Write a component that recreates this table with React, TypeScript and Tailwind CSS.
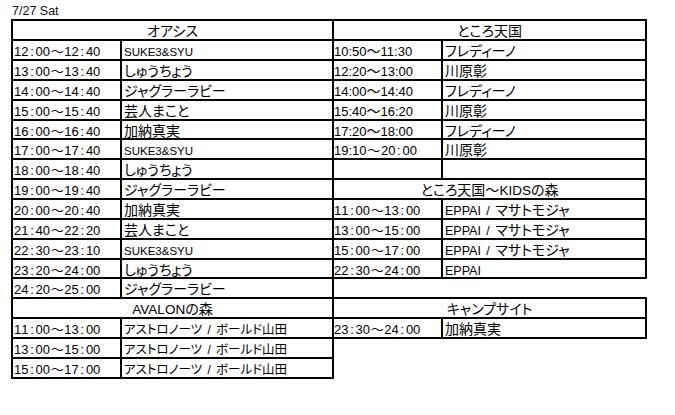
import React from "react";

const H = (k: number) => (k === 5 || k === 12 ? "h-[19px]" : "h-[20px]");

function Runs({ s, latin = "text-[13px]", cjk = "text-[14px]" }: { s: string; latin?: string; cjk?: string }) {
  const parts = s.match(/[\x00-\x7F]+|[^\x00-\x7F]+/g) || [];
  return (
    <>
      {parts.map((p, i) =>
        /^[\x00-\x7F]+$/.test(p) ? (
          <span key={i} className={`font-['Liberation_Sans',sans-serif] whitespace-pre [word-spacing:2px] ${latin}`}>
            {p}
          </span>
        ) : (
          <span key={i} className={`font-['Noto_Sans_CJK_JP',sans-serif] [font-feature-settings:'palt'] ${cjk}`}>
            {p}
          </span>
        )
      )}
    </>
  );
}

function Mono({ s }: { s: string }) {
  return (
    <>
      {Array.from(s).map((c, i) =>
        c.charCodeAt(0) < 128 ? (
          <span key={i} className="inline-block w-[7.2px] text-center font-['Liberation_Sans',sans-serif] text-[13px]">
            {c}
          </span>
        ) : (
          <span key={i} className="inline-block w-[14.4px] text-center font-['Noto_Sans_CJK_JP',sans-serif] text-[13px]">
            {c}
          </span>
        )
      )}
    </>
  );
}

type RowT =
  | { kind: "head"; text: string }
  | { kind: "row"; time: React.ReactNode; name: React.ReactNode }
  | { kind: "empty" }
  | { kind: "spacer" };

const suke = <Runs s="SUKE3&SYU" latin="text-[11.5px]" />;
const astro = <Runs s="アストロノーツ / ボールド山田" latin="text-[12px]" cjk="text-[12.5px]" />;
const n = (s: string) => <Runs s={s} latin="text-[12.5px]" />;

const left: RowT[] = [
  { kind: "head", text: "オアシス" },
  { kind: "row", time: <Mono s="12:00～12:40" />, name: suke },
  { kind: "row", time: <Mono s="13:00～13:40" />, name: n("しゅうちょう") },
  { kind: "row", time: <Mono s="14:00～14:40" />, name: n("ジャグラーラビー") },
  { kind: "row", time: <Mono s="15:00～15:40" />, name: n("芸人まこと") },
  { kind: "row", time: <Mono s="16:00～16:40" />, name: n("加納真実") },
  { kind: "row", time: <Mono s="17:00～17:40" />, name: suke },
  { kind: "row", time: <Mono s="18:00～18:40" />, name: n("しゅうちょう") },
  { kind: "row", time: <Mono s="19:00～19:40" />, name: n("ジャグラーラビー") },
  { kind: "row", time: <Mono s="20:00～20:40" />, name: n("加納真実") },
  { kind: "row", time: <Mono s="21:40～22:20" />, name: n("芸人まこと") },
  { kind: "row", time: <Mono s="22:30～23:10" />, name: suke },
  { kind: "row", time: <Mono s="23:20～24:00" />, name: n("しゅうちょう") },
  { kind: "row", time: <Mono s="24:20～25:00" />, name: n("ジャグラーラビー") },
  { kind: "head", text: "AVALONの森" },
  { kind: "row", time: <Mono s="11:00～13:00" />, name: astro },
  { kind: "row", time: <Mono s="13:00～15:00" />, name: astro },
  { kind: "row", time: <Mono s="15:00～17:00" />, name: astro },
];

const prop = (s: string) => <Runs s={s} latin="text-[13px]" />;
const eppai = n("EPPAI / マサトモジャ");

const right: RowT[] = [
  { kind: "head", text: "ところ天国" },
  { kind: "row", time: prop("10:50～11:30"), name: n("フレディーノ") },
  { kind: "row", time: prop("12:20～13:00"), name: n("川原彰") },
  { kind: "row", time: prop("14:00～14:40"), name: n("フレディーノ") },
  { kind: "row", time: prop("15:40～16:20"), name: n("川原彰") },
  { kind: "row", time: prop("17:20～18:00"), name: n("フレディーノ") },
  {
    kind: "row",
    time: (
      <>
        <Runs s="19:10" latin="text-[13px]" />
        <Mono s="～20:00" />
      </>
    ),
    name: n("川原彰"),
  },
  { kind: "empty" },
  { kind: "head", text: "ところ天国～KIDSの森" },
  { kind: "row", time: <Mono s="11:00～13:00" />, name: eppai },
  { kind: "row", time: <Mono s="13:00～15:00" />, name: eppai },
  { kind: "row", time: <Mono s="15:00～17:00" />, name: eppai },
  { kind: "row", time: <Mono s="22:30～24:00" />, name: n("EPPAI") },
  { kind: "spacer" },
  { kind: "head", text: "キャンプサイト" },
  { kind: "row", time: <Mono s="23:30～24:00" />, name: n("加納真実") },
];

function Rows({ rows, side }: { rows: RowT[]; side: "l" | "r" }) {
  const rb = side === "r" ? "border-r-2" : "";
  const tp = side === "r" ? "pl-0" : "pl-[1px]";
  return (
    <>
      {rows.map((r, k) => {
        if (r.kind === "spacer") return <div key={k} className={`${H(k)} border-b-2 border-black`} />;
        if (r.kind === "head")
          return (
            <div key={k} className={`${H(k)} ${rb} border-b-2 border-black text-center pt-[1px] leading-[17px] whitespace-nowrap`}>
              <Runs s={r.text} latin="text-[13.5px]" />
            </div>
          );
        return (
          <div key={k} className={`flex ${H(k)} ${rb} border-b-2 border-black`}>
            <div className={`w-[109px] shrink-0 border-r-2 border-black ${tp} pt-[1px] leading-[17px] whitespace-nowrap`}>
              {r.kind === "row" ? r.time : null}
            </div>
            <div className="flex-1 pl-[2px] pt-[1px] leading-[17px] whitespace-nowrap">
              {r.kind === "row" ? r.name : null}
            </div>
          </div>
        );
      })}
    </>
  );
}

export default function App() {
  return (
    <div className="w-[675px] h-[415px] bg-white text-black overflow-hidden">
      <div className="h-[19px] pl-[12px] pt-[5px] leading-[12px] text-[12.5px] text-[#111] font-['Liberation_Sans',sans-serif]">
        7/27 Sat
      </div>
      <div className="flex items-start pl-[11px]">
        <div className="w-[323px] border-l-2 border-t-2 border-r-2 border-black">
          <Rows rows={left} side="l" />
        </div>
        <div className="w-[313px] border-t-2 border-black">
          <Rows rows={right} side="r" />
        </div>
      </div>
    </div>
  );
}
